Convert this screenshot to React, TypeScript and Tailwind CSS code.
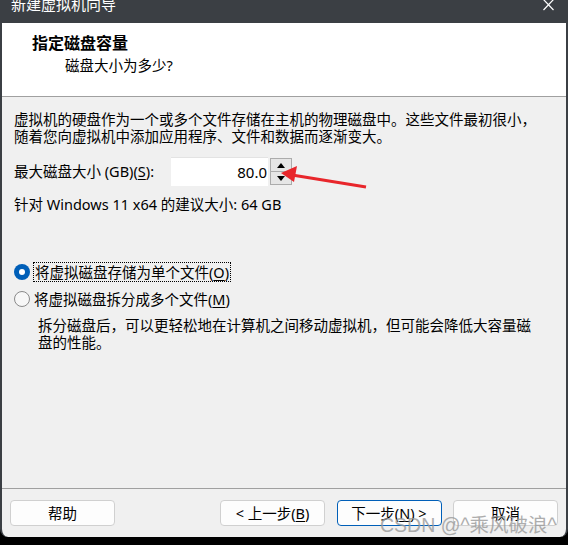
import React from "react";

function U({ children }: { children: React.ReactNode }) {
  return <span className="underline underline-offset-2">{children}</span>;
}

function Radio({ checked }: { checked?: boolean }) {
  if (checked) {
    return (
      <span className="w-[16px] h-[16px] rounded-full bg-[#005fb8] flex items-center justify-center shrink-0">
        <span className="w-[6px] h-[6px] rounded-full bg-white" />
      </span>
    );
  }
  return <span className="w-[16px] h-[16px] rounded-full border border-[#8a8a8a] bg-[#f7f7f7] shrink-0" />;
}

function Btn({ children, primary }: { children: React.ReactNode; primary?: boolean }) {
  return (
    <button
      className={
        primary
          ? "w-[105px] h-[26px] rounded-[4px] bg-[#fdfdfd] border border-[#005fb8] text-[14.5px] leading-[24px] text-black"
          : "w-[105px] h-[26px] rounded-[4px] bg-[#fdfdfd] border border-[#d0d0d0] text-[14.5px] leading-[24px] text-black"
      }
    >
      {children}
    </button>
  );
}

export default function App() {
  return (
    <div className="w-[568px] h-[545px] bg-black relative overflow-hidden font-['Noto_Sans','Noto_Sans_CJK_SC',sans-serif] text-black">
      <div className="h-[537px] flex flex-col border-x-2 border-b-0 border-[#3b3f44] rounded-b-[8px] overflow-hidden bg-[#f0f0f0]">
        {/* title bar */}
        <div className="h-[23px] bg-[#3b3f44] flex justify-between items-start pl-[9px] pr-[12px] overflow-hidden shrink-0">
          <div className="text-white text-[15px] leading-[20px] -mt-[6px]">新建虚拟机向导</div>
          <svg width="11" height="12" viewBox="0 0 11 12" className="-mt-[1px]">
            <path d="M0.5 0.5 L10.5 11 M10.5 0.5 L0.5 11" stroke="white" strokeWidth="1.2" fill="none" />
          </svg>
        </div>

        {/* header */}
        <div className="h-[74px] bg-white border-b border-[#a0a0a0] pl-[30px] pt-[9px] shrink-0">
          <div className="text-[16px] leading-[22px] font-bold">指定磁盘容量</div>
          <div className="text-[14.5px] leading-[22px] pl-[33px]">磁盘大小为多少?</div>
        </div>

        {/* body */}
        <div className="flex-1 flex flex-col px-[12px] pt-[14px] text-[14.5px]">
          <p className="leading-[17px]">
            虚拟机的硬盘作为一个或多个文件存储在主机的物理磁盘中。这些文件最初很小，
            <br />
            随着您向虚拟机中添加应用程序、文件和数据而逐渐变大。
          </p>

          <div className="mt-[12px] flex items-center h-[29px]">
            <span className="w-[157px]">
              最大磁盘大小 (GB)(<U>S</U>):
            </span>
            <div className="w-[97px] h-[29px] bg-white border-t border-[#e3e3e3] text-right pr-[1px] leading-[28px] text-[15px]">
              80.0
            </div>
            <div className="ml-[2px] flex flex-col w-[22px] h-[27px] border border-[#acacac] bg-[#e6e6e6]">
              <div className="flex-1 flex items-center justify-center border-b border-[#acacac]">
                <svg width="8" height="5" viewBox="0 0 8 5">
                  <path d="M4 0 L8 5 L0 5 Z" fill="black" />
                </svg>
              </div>
              <div className="flex-1 flex items-center justify-center">
                <svg width="8" height="5" viewBox="0 0 8 5">
                  <path d="M0 0 L8 0 L4 5 Z" fill="black" />
                </svg>
              </div>
            </div>
          </div>

          <div className="mt-[10px] leading-[17px]">针对 Windows 11 x64 的建议大小: 64 GB</div>

          <div className="mt-[49px] flex items-center gap-[3px] h-[20px]">
            <Radio checked />
            <span className="border border-dotted border-black px-[1px] leading-[18px]">
              将虚拟磁盘存储为单个文件(<U>O</U>)
            </span>
          </div>
          <div className="mt-[7px] flex items-center gap-[4px] h-[20px]">
            <Radio />
            <span className="leading-[18px]">
              将虚拟磁盘拆分成多个文件(<U>M</U>)
            </span>
          </div>
          <p className="mt-[8px] pl-[24px] leading-[17px]">
            拆分磁盘后，可以更轻松地在计算机之间移动虚拟机，但可能会降低大容量磁
            <br />
            盘的性能。
          </p>
        </div>

        {/* footer */}
        <div className="h-[49px] border-t border-[#a0a0a0] flex justify-between items-start pt-[11px] px-[8px] shrink-0">
          <Btn>帮助</Btn>
          <div className="flex gap-[11.5px]">
            <Btn>
              &lt; 上一步(<U>B</U>)
            </Btn>
            <Btn primary>
              下一步(<U>N</U>) &gt;
            </Btn>
            <Btn>取消</Btn>
          </div>
        </div>
      </div>

      {/* red annotation arrow */}
      <svg className="absolute left-0 top-0 pointer-events-none" width="568" height="545">
        <line x1="366" y1="187" x2="292" y2="175" stroke="#e8262b" strokeWidth="3" />
        <path d="M281 173 L297 166 L294 182 Z" fill="#e8262b" />
      </svg>

      {/* watermark */}
      <div className="absolute left-[380px] top-[511px] text-[19.5px] leading-[28px] text-[#9a9a9a] opacity-80 font-['Liberation_Sans','Noto_Sans_CJK_SC',sans-serif] pointer-events-none whitespace-nowrap">
        CSDN @^乘风破浪^
      </div>
    </div>
  );
}
